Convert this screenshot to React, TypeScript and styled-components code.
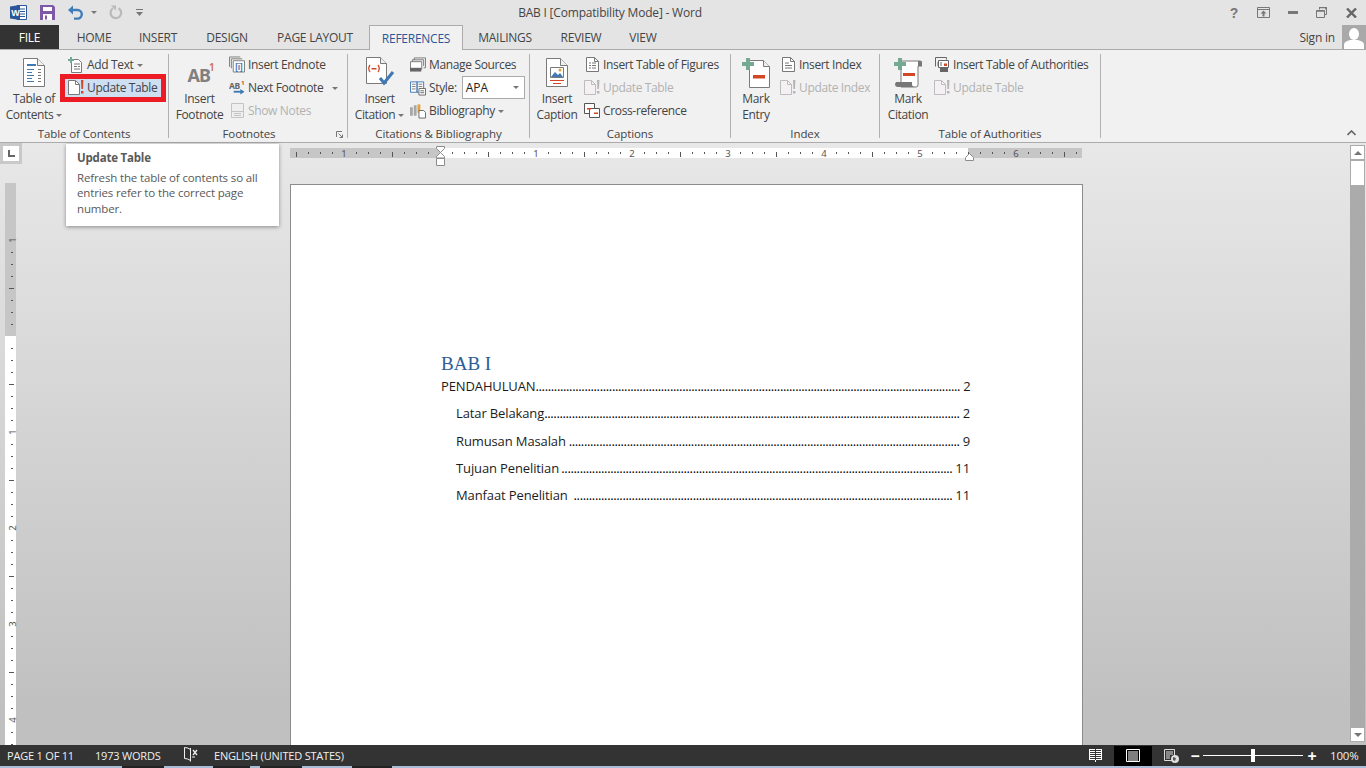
import React from 'react';
import styled, {createGlobalStyle} from 'styled-components';

const GlobalStyle = createGlobalStyle`
  html, body {
    margin: 0;
    padding: 0;
    height: 100%;
    overflow: hidden;
    background: #e4e4e4;
  }
  body {
    font-family: "Open Sans", "Noto Sans", sans-serif;
    font-size: 12px;
    color: #444;
  }
`;

// window frame
const Window = styled.div`
  position: relative;
  width: 1366px;
  height: 768px;
  display: flex;
  flex-direction: column;
  overflow: hidden;
`;

const TitleBar = styled.div`
  height: 25px;
  flex: none;
  display: flex;
  align-items: center;
  background: #e4e4e4;
`;

const QuickAccess = styled.div`
  width: 340px;
  padding-left: 10px;
  box-sizing: border-box;
  display: flex;
  align-items: center;
`;

const QuickIcon = styled.span<{$w: number}>`
  width: ${props => props.$w}px;
  display: flex;
  align-items: center;
`;

const WindowTitle = styled.div`
  width: 540px;
  text-align: center;
  font-size: 12px;
  letter-spacing: -0.2px;
  color: #444;
`;

const WindowControls = styled.div`
  margin-left: auto;
  display: flex;
  align-items: center;
`;

const WindowButton = styled.span`
  width: 29.4px;
  height: 25px;
  display: flex;
  align-items: center;
  justify-content: center;
`;

const TabBar = styled.div`
  height: 25px;
  flex: none;
  display: flex;
  align-items: stretch;
  background: #e4e4e4;
  border-bottom: 1px solid #ababab;
  box-sizing: border-box;
`;

const FileTab = styled.div`
  width: 59px;
  margin-right: 3px;
  background: #333;
  color: #fff;
  display: flex;
  align-items: center;
  justify-content: center;
  letter-spacing: -0.2px;
`;

const Tab = styled.div<{$w: number; $active?: boolean}>`
  width: ${props => props.$w}px;
  box-sizing: border-box;
  margin-left: ${props => (props.$active ? '3px' : '0')};
  display: flex;
  align-items: center;
  justify-content: center;
  letter-spacing: -0.25px;
  color: ${props => (props.$active ? '#2b579a' : '#444')};
  background: ${props => (props.$active ? '#f1f1f1' : 'transparent')};
  border: ${props => (props.$active ? '1px solid #ababab' : 'none')};
  border-bottom: none;
  height: ${props => (props.$active ? '25px' : 'auto')};
`;

const SignIn = styled.div`
  margin-left: auto;
  display: flex;
  align-items: center;
  gap: 7px;
  letter-spacing: -0.2px;
`;

const Avatar = styled.div`
  width: 24px;
  height: 24px;
  background: #a9a9a9;
  display: flex;
  align-items: flex-end;
  justify-content: center;
`;

// ribbon
const Ribbon = styled.div`
  position: relative;
  height: 93px;
  flex: none;
  box-sizing: border-box;
  padding-top: 4px;
  display: flex;
  align-items: flex-start;
  background: #f1f1f1;
  border-bottom: 1px solid #ababab;
`;

const Group = styled.div<{$w: number}>`
  position: relative;
  width: ${props => props.$w}px;
  height: 84px;
  box-sizing: border-box;
  padding-left: 5px;
  border-right: 1px solid #b1b1b1;
  flex: none;
`;

const GroupBody = styled.div<{$gap: number}>`
  height: 72px;
  display: flex;
  gap: ${props => props.$gap}px;
`;

const GroupLabel = styled.div<{$launcher?: boolean}>`
  height: 12px;
  line-height: 15px;
  margin-left: -5px;
  padding-right: ${props => (props.$launcher ? '18px' : '0')};
  text-align: center;
  font-size: 11.5px;
  letter-spacing: -0.1px;
  color: #444;
`;

const LargeButton = styled.div<{$w: number}>`
  width: ${props => props.$w}px;
  flex: none;
  display: flex;
  flex-direction: column;
  align-items: center;
`;

const LargeIcon = styled.div`
  height: 37px;
  display: flex;
  align-items: center;
  justify-content: center;
`;

const LargeText = styled.div`
  font-size: 12px;
  line-height: 16px;
  text-align: center;
  white-space: nowrap;
  letter-spacing: -0.35px;
`;

const SmallColumn = styled.div`
  margin-top: -1px;
  display: flex;
  flex-direction: column;
`;

const SmallButton = styled.div<{$marked?: boolean; $disabled?: boolean}>`
  display: flex;
  align-items: center;
  gap: 3px;
  box-sizing: border-box;
  padding: ${props => (props.$marked ? '0 4px 1px 3px' : '0 4px 0 3px')};
  height: ${props => (props.$marked ? '18px' : '23px')};
  margin: ${props => (props.$marked ? '3px 0 2px' : '0')};
  white-space: nowrap;
  letter-spacing: -0.35px;
  color: ${props => (props.$disabled ? '#b1b1b1' : '#444')};
  background: ${props => (props.$marked ? '#cfdff2' : 'transparent')};
  outline: ${props => (props.$marked ? '5px solid #ed1c24' : 'none')};
`;

const SmallIcon = styled.span`
  width: 16px;
  height: 16px;
  flex: none;
  display: flex;
  align-items: center;
  justify-content: center;
`;

const Caret = styled.span<{$left?: number}>`
  display: inline-block;
  width: 0;
  height: 0;
  margin-left: ${props => props.$left ?? 3}px;
  vertical-align: middle;
  border-left: 3px solid transparent;
  border-right: 3px solid transparent;
  border-top: 3px solid #777;
`;

const StyleBox = styled.div`
  width: 63px;
  height: 23px;
  margin-left: 2px;
  padding: 0 5px 0 3px;
  box-sizing: border-box;
  display: flex;
  align-items: center;
  justify-content: space-between;
  background: #fff;
  border: 1px solid #ababab;
  color: #222;
  letter-spacing: 0;
`;

const Launcher = styled.span`
  position: absolute;
  right: 4px;
  bottom: 0;
  line-height: 0;
`;

const Collapse = styled.span`
  position: absolute;
  right: 10px;
  bottom: 6px;
  line-height: 0;
`;

const Tooltip = styled.div`
  position: absolute;
  left: 66px;
  top: 144px;
  width: 213px;
  height: 82px;
  box-sizing: border-box;
  padding: 6px 11px;
  background: #fff;
  color: #595959;
  box-shadow: 0 1px 4px rgba(0, 0, 0, 0.4);
  z-index: 5;
`;

const TooltipTitle = styled.div`
  font-weight: 700;
  font-size: 11.5px;
  line-height: 15px;
  letter-spacing: -0.2px;
  margin-bottom: 5px;
`;

const TooltipText = styled.div`
  font-size: 11.5px;
  line-height: 15.4px;
  letter-spacing: -0.14px;
`;

// document area
const Workspace = styled.div`
  flex: 1;
  min-height: 0;
  display: grid;
  grid-template-columns: 22px 1fr 16px;
  background: linear-gradient(#e8e8e8 0%, #c0c0c0 94%);
`;

const LeftRail = styled.div`
  display: flex;
  flex-direction: column;
  align-items: flex-start;
`;

const TabSelector = styled.div`
  width: 22px;
  height: 21px;
  box-sizing: border-box;
  padding: 3px;
  background: #c9c9c9;
`;

const TabSelectorInner = styled.div`
  width: 16px;
  height: 15px;
  background: #fff;
  display: flex;
  align-items: center;
  justify-content: center;
`;

const VRuler = styled.div`
  margin: 19px 0 0 5px;
  width: 11px;
  flex: 1;
  background: linear-gradient(#c6c6c6 0, #c6c6c6 153px, #fff 153px);
`;

const Center = styled.div`
  min-width: 0;
  padding-left: 268px;
  display: flex;
  flex-direction: column;
  align-items: flex-start;
`;

const HRuler = styled.div`
  position: relative;
  margin-top: 5px;
  width: 792px;
  height: 10px;
  background: linear-gradient(90deg, #c6c6c6 0, #c6c6c6 150px, #fff 150px, #fff 678px, #c6c6c6 678px);
`;

const RulerMarks = styled.svg`
  display: block;
  overflow: visible;
`;

const IndentLeft = styled.svg`
  position: absolute;
  left: 146px;
  top: -2px;
`;

const IndentRight = styled.svg`
  position: absolute;
  left: 675px;
  top: 5px;
`;

const Page = styled.div`
  margin-top: 26px;
  width: 793px;
  flex: 1;
  box-sizing: border-box;
  padding: 166px 112px 0 150px;
  background: #fff;
  border: 1px solid #8c8c8c;
  border-bottom: none;
`;

const Heading = styled.div`
  font-family: "Liberation Serif", serif;
  font-size: 19px;
  line-height: 25px;
  color: #2e5d98;
`;

const TocRow = styled.div<{$indent?: boolean}>`
  height: 20px;
  margin-bottom: 7.3px;
  padding-left: ${props => (props.$indent ? '15px' : '0')};
  display: flex;
  align-items: center;
  font-size: 13px;
  color: #1c1c1c;
`;

const TocLabel = styled.span`
  white-space: nowrap;
  letter-spacing: -0.12px;
`;

const Leader = styled.span`
  margin-left: auto;
  white-space: nowrap;
  letter-spacing: -0.36px;
  color: #000;
`;

const TocPage = styled.span`
  margin-left: 3px;
  letter-spacing: -0.12px;
`;

const Scrollbar = styled.div`
  width: 15px;
  display: flex;
  flex-direction: column;
  padding: 2px 0 3px;
  box-sizing: border-box;
`;

const ScrollArrow = styled.div`
  width: 15px;
  height: 15px;
  flex: none;
  box-sizing: border-box;
  background: #fff;
  border: 1px solid #ababab;
  display: flex;
  align-items: center;
  justify-content: center;
`;

const ScrollTrack = styled.div`
  flex: 1;
  background: #ababab;
`;

const ScrollThumb = styled.div`
  height: 26px;
  box-sizing: border-box;
  background: #fff;
  border: 1px solid #ababab;
`;

const Triangle = styled.span<{$down?: boolean}>`
  width: 0;
  height: 0;
  border-left: 4px solid transparent;
  border-right: 4px solid transparent;
  border-bottom: ${props => (props.$down ? 'none' : '4px solid #777')};
  border-top: ${props => (props.$down ? '4px solid #777' : 'none')};
`;

// status bar
const StatusBar = styled.div`
  height: 21px;
  flex: none;
  padding-left: 7px;
  display: flex;
  align-items: center;
  background: #333;
  color: #f0f0f0;
  font-size: 11px;
  letter-spacing: -0.2px;
`;

const StatusText = styled.span<{$w: number}>`
  width: ${props => props.$w}px;
  flex: none;
  white-space: nowrap;
`;

const StatusRight = styled.div`
  margin-left: auto;
  height: 100%;
  display: flex;
  align-items: center;
`;

const ViewButton = styled.span<{$active?: boolean}>`
  width: 38px;
  height: 20px;
  display: flex;
  align-items: center;
  justify-content: center;
  background: ${props => (props.$active ? '#000' : 'transparent')};
`;

const ZoomSlider = styled.div`
  position: relative;
  width: 100px;
  height: 1px;
  margin: 0 4px 0 3px;
  background: #fff;
`;

const ZoomThumb = styled.span`
  position: absolute;
  left: 48px;
  top: -6px;
  width: 4px;
  height: 13px;
  background: #fff;
`;

const ZoomSign = styled.span`
  width: 10px;
  font-size: 16px;
  font-weight: 700;
  line-height: 16px;
  text-align: center;
  color: #fff;
`;

const ZoomValue = styled.span`
  width: 49px;
  padding-left: 13px;
  box-sizing: border-box;
  font-size: 11.5px;
`;

const TaskbarEdge = styled.div`
  height: 2px;
  flex: none;
  background: linear-gradient(
    90deg,
    #a9bdd6 0, #a9bdd6 122px, #222 122px, #222 164px, #a9bdd6 164px, #a9bdd6 213px,
    #222 213px, #222 250px, #a9bdd6 250px, #a9bdd6 260px, #222 260px, #222 302px,
    #a9bdd6 302px, #a9bdd6 352px, #222 352px, #222 392px, #a9bdd6 392px
  );
`;

// icons
const GREY = '#7a7a7a';
const BLUE = '#3f78b5';
const RED = '#d24726';
const GREEN = '#74a993';

const WordIcon = () => (
  <svg width="17" height="17" viewBox="0 0 17 17">
    <path d="M7 1.5h9.5v14H7z" fill="#fff" stroke="#2b579a" />
    <path d="M10 5h5M10 7.5h5M10 10h5M10 12.5h5" stroke="#2b579a" />
    <path d="M0 2.5L10 1v15L0 14.5z" fill="#2b579a" />
    <text x="1.2" y="12" fontFamily="Liberation Sans" fontSize="9" fontWeight="700" fill="#fff">W</text>
  </svg>
);

const SaveIcon = () => (
  <svg width="15" height="15" viewBox="0 0 15 15">
    <path d="M0 0h13l2 2v13H0z" fill="#8058a8" />
    <path d="M3 2h9v4H3z" fill="#fff" />
    <path d="M3 9h9v6H3z" fill="#fff" />
    <path d="M5 10.5h2v4H5z" fill="#8058a8" />
  </svg>
);

const UndoIcon = () => (
  <svg width="16" height="15" viewBox="0 0 16 15">
    <path d="M4 5h5.5a4.3 4.3 0 0 1 0 8.6H6" fill="none" stroke="#3f7cb8" strokeWidth="2.4" />
    <path d="M0 5l5-4.5v9z" fill="#3f7cb8" />
  </svg>
);

const RedoIcon = () => (
  <svg width="14" height="15" viewBox="0 0 14 15">
    <path d="M9.5 3.2a5.3 5.3 0 1 1-5.6.2" fill="none" stroke="#b9b9b9" strokeWidth="2.2" />
    <path d="M2 0.5h5v5z" fill="#b9b9b9" />
  </svg>
);

const CustomizeIcon = () => (
  <svg width="7" height="7" viewBox="0 0 7 7">
    <path d="M0 0h7v1H0zM0 3h7L3.5 7z" fill="#777" />
  </svg>
);

const Help = () => (
  <svg width="10" height="13" viewBox="0 0 10 13">
    <text x="5" y="11.5" textAnchor="middle" fontFamily="Liberation Sans" fontWeight="700" fontSize="14" fill="#777">?</text>
  </svg>
);

const RibbonDisplay = () => (
  <svg width="13" height="11" viewBox="0 0 13 11">
    <path d="M.5.5h12v10H.5z" fill="none" stroke="#777" />
    <path d="M1 2.5h11" stroke="#777" />
    <path d="M6.5 3.5l3 3h-2v3h-2v-3h-2z" fill="#777" />
  </svg>
);

const MinIcon = () => (
  <svg width="10" height="3" viewBox="0 0 10 3">
    <path d="M0 0h10v3H0z" fill="#777" />
  </svg>
);

const RestoreIcon = () => (
  <svg width="11" height="11" viewBox="0 0 11 11">
    <path d="M3.5 2.5v-2h7v7h-2" fill="none" stroke="#777" />
    <path d="M3 .5h7v2" fill="none" stroke="#777" strokeWidth="1.5" />
    <path d="M.5 3.5h8v7h-8z" fill="none" stroke="#777" />
    <path d="M.5 4h8" stroke="#777" strokeWidth="1.5" />
  </svg>
);

const CloseIcon = () => (
  <svg width="11" height="10" viewBox="0 0 11 10">
    <path d="M1 .5l9 9M10 .5l-9 9" stroke="#666" strokeWidth="2.4" />
  </svg>
);

const PersonIcon = () => (
  <svg width="20" height="22" viewBox="0 0 20 22">
    <ellipse cx="10" cy="7" rx="5" ry="6" fill="#fff" />
    <path d="M0 22v-4c0-3 3-4 6-5h8c3 1 6 2 6 5v4z" fill="#fff" />
  </svg>
);

const TocIcon = () => (
  <svg width="22" height="29" viewBox="0 0 22 29">
    <path d="M.5.5h14l7 7v21H.5z" fill="#fff" stroke={GREY} />
    <path d="M14.5.5v7h7" fill="#f0f0f0" stroke={GREY} />
    <path d="M4 6h9v2H4z" fill={BLUE} />
    <path d="M4 11h7v1H4zM4 14h5v1H4zM4 17h7v1H4zM4 20h5v1H4zM4 23h7v1H4z" fill={BLUE} />
    <path d="M15 11h3v1h-3zM15 14h3v1h-3zM15 17h3v1h-3zM15 20h3v1h-3zM15 23h3v1h-3z" fill="#777" />
  </svg>
);

const AddTextIcon = () => (
  <svg width="16" height="16" viewBox="0 0 16 16">
    <path d="M3.5 2.5h7l3 3v10h-10z" fill="#fff" stroke={GREY} />
    <path d="M6 7h6M6 9.5h3M10 9.5h2M6 12h6" stroke="#777" />
    <path d="M2 0h2v2h2v2H4v2H2V4H0V2h2z" fill={GREEN} />
  </svg>
);

const UpdateIcon = ({disabled}: {disabled?: boolean}) => (
  <svg width="16" height="15" viewBox="0 0 16 15">
    <path d="M.5.5h7l4 4v10H.5z" fill={disabled ? '#f4f0f4' : '#fff'} stroke={disabled ? '#bdbdbd' : '#7a7a7a'} />
    <path d="M7.5.5v4h4" fill="none" stroke={disabled ? '#bdbdbd' : '#7a7a7a'} />
    <path d="M13 0h2.4l-.4 9h-1.6zM13 11h2.4v2.5H13z" fill={disabled ? '#b5b5b5' : RED} />
  </svg>
);

const FootnoteIcon = () => (
  <svg width="30" height="30" viewBox="0 0 30 30">
    <text x="2.5" y="23.5" fontFamily="Noto Sans" fontWeight="700" fontSize="18" letterSpacing="-1" fill="#808080">AB</text>
    <text x="24" y="12.5" fontFamily="Noto Sans" fontWeight="600" fontSize="10" fill="#d2694a">1</text>
  </svg>
);

const EndnoteIcon = () => (
  <svg width="17" height="17" viewBox="0 0 17 17">
    <path d="M.5 11V.5H12M2.5 12.5V2.5H14" fill="none" stroke={GREY} />
    <path d="M4.5 4.5h12v12h-12z" fill="#fff" stroke={GREY} />
    <text x="10.5" y="14" textAnchor="middle" fontFamily="Liberation Sans" fontWeight="700" fontSize="9" fill={BLUE}>[i]</text>
  </svg>
);

const NextFootnoteIcon = () => (
  <svg width="17" height="17" viewBox="0 0 17 17">
    <text x="0" y="10" fontFamily="Noto Sans" fontWeight="700" fontSize="9" fill="#666">AB</text>
    <text x="13" y="5.5" fontFamily="Noto Sans" fontWeight="700" fontSize="6" fill={RED}>1</text>
    <path d="M5 13h8" stroke={BLUE} strokeWidth="2" />
    <path d="M12 10l4.5 3-4.5 3z" fill={BLUE} />
  </svg>
);

const ShowNotesIcon = () => (
  <svg width="13" height="15" viewBox="0 0 13 15">
    <path d="M.5.5h12v14H.5z" fill="#efefef" stroke="#c4c4c4" />
    <path d="M1 8.5h11M3 10.5h7M3 12.5h7" stroke="#c4c4c4" />
  </svg>
);

const CitationIcon = () => (
  <svg width="30" height="31" viewBox="0 0 30 31">
    <path d="M1.5.5h14l6 6v20h-20z" fill="#fff" stroke={GREY} />
    <path d="M15.5.5v6h6" fill="#f0f0f0" stroke={GREY} />
    <path d="M5 8q-2.5 3.5 0 7M13 8q2.5 3.5 0 7" fill="none" stroke={RED} strokeWidth="1.3" />
    <path d="M6.5 11h5v1.5h-5z" fill={RED} />
    <path d="M15 21l4 5 9-11" fill="none" stroke={BLUE} strokeWidth="3" />
  </svg>
);

const SourcesIcon = () => (
  <svg width="17" height="15" viewBox="0 0 17 15">
    <path d="M4.5 3V.5h12V11h-2M2.5 5V2.5h12V9" fill="none" stroke="#777" />
    <path d="M.5 4.5h12v8H.5z" fill="#fff" stroke="#777" />
    <path d="M0 11h12v4H0z" fill="#666" />
  </svg>
);

const StyleIcon = () => (
  <svg width="17" height="16" viewBox="0 0 17 16">
    <path d="M.5 1.5h7v11h-7zM7.5 1.5h7v11h-7z" fill="#fff" stroke={BLUE} />
    <path d="M2 4h4M2 6.5h4M2 9h4M9 4h4M9 6.5h4" stroke="#777" />
    <path d="M9.5 8.5h7v7h-7z" fill="#fff" stroke="#666" />
    <path d="M11 11h4M11 13h4" stroke="#666" />
  </svg>
);

const BibliographyIcon = () => (
  <svg width="17" height="16" viewBox="0 0 17 16">
    <path d="M0 4h3v9H0zM4 2h3v11H4z" fill="#a7a7a7" />
    <path d="M8 1h3v9H8z" fill="#e2a33b" />
    <path d="M9.5 7.5h5l2 2v6h-7z" fill="#fff" stroke="#666" />
  </svg>
);

const CaptionIcon = () => (
  <svg width="22" height="29" viewBox="0 0 22 29">
    <path d="M.5.5h14l7 7v21H.5z" fill="#fff" stroke={GREY} />
    <path d="M14.5.5v7h7" fill="#f0f0f0" stroke={GREY} />
    <path d="M4.5 9.5h13v10h-13z" fill="#fff" stroke={GREY} />
    <path d="M5 19l4-5 3 3 2-2 3 4z" fill={BLUE} />
    <circle cx="14" cy="12" r="1.5" fill="#e2a33b" />
    <path d="M4 22h14v1H4zM7 25h8v1H7z" fill={RED} />
  </svg>
);

const FiguresIcon = () => (
  <svg width="13" height="15" viewBox="0 0 13 15">
    <path d="M.5.5h8l4 4v10H.5z" fill="#fff" stroke="#777" />
    <path d="M8.5.5v4h4" fill="none" stroke="#777" />
    <path d="M3 6h2M6 6h4M3 8.5h2M6 8.5h4M3 11h2M6 11h4" stroke="#777" />
  </svg>
);

const CrossRefIcon = () => (
  <svg width="16" height="15" viewBox="0 0 16 15">
    <path d="M.5.5h10v10H.5z" fill="#fff" stroke="#555" />
    <path d="M5.5 5.5h10v9h-10z" fill="#fff" stroke="#555" />
    <path d="M3 5h4v1.5H3zM10 9.5h4V11h-4z" fill={RED} />
  </svg>
);

const MarkEntryIcon = () => (
  <svg width="28" height="30" viewBox="0 0 28 30">
    <path d="M7.5 2.5h14l6 6v21h-20z" fill="#fff" stroke={GREY} />
    <path d="M21.5 2.5v6h6" fill="#f0f0f0" stroke={GREY} />
    <path d="M4 0h4v4h4v4H8v4H4V8H0V4h4z" fill={GREEN} />
    <path d="M11 17h12v3.5H11z" fill={RED} />
  </svg>
);

const IndexIcon = () => (
  <svg width="13" height="15" viewBox="0 0 13 15">
    <path d="M.5.5h8l4 4v10H.5z" fill="#fff" stroke="#777" />
    <path d="M8.5.5v4h4" fill="none" stroke="#777" />
    <path d="M3 6h4M3 8.5h7M3 11h7" stroke="#777" />
  </svg>
);

const MarkCitationIcon = () => (
  <svg width="28" height="30" viewBox="0 0 28 30">
    <path d="M7 3h19a2 2 0 0 1 2 2v3h-4v19a2 2 0 0 1-2 2H7z" fill="#fff" stroke={GREY} />
    <path d="M24 3h2a2 2 0 0 1 2 2v3h-4z" fill="#777" />
    <path d="M2 24h16v2a3 3 0 0 0 3 3H4a3 3 0 0 1-3-3z" fill="#777" />
    <path d="M4 0h4v4h4v4H8v4H4V8H0V4h4z" fill={GREEN} />
    <path d="M9 15h12v3H9z" fill={RED} />
  </svg>
);

const AuthoritiesIcon = () => (
  <svg width="15" height="15" viewBox="0 0 15 15">
    <path d="M.5 9.5V.5h11v2" fill="none" stroke="#666" />
    <path d="M3.5 3.5h10v7h-10z" fill="#fff" stroke="#666" />
    <path d="M2 6h1M2 8h1M5 6h2M5 8h2" stroke="#666" />
    <path d="M9 6.5h3V9H9z" fill={RED} />
    <path d="M5 11h8v4H5z" fill="#666" />
  </svg>
);

const LauncherIcon = () => (
  <svg width="7" height="7" viewBox="0 0 7 7">
    <path d="M.5 6V.5H6M2.5 2.5l4 4M6.5 3.5v3h-3" fill="none" stroke="#777" />
  </svg>
);

const CollapseIcon = () => (
  <svg width="9" height="6" viewBox="0 0 9 6">
    <path d="M.5 5l4-4 4 4" fill="none" stroke="#666" strokeWidth="1.6" />
  </svg>
);

const TabStopIcon = () => (
  <svg width="7" height="7" viewBox="0 0 7 7">
    <path d="M0 0h2v5h5v2H0z" fill="#666" />
  </svg>
);

const ProofingIcon = () => (
  <svg width="14" height="15" viewBox="0 0 14 15">
    <path d="M6.5 2.5Q4 .5.5.5v11q3.5 0 6 2" fill="none" stroke="#f0f0f0" />
    <path d="M6.5 1v13.5" stroke="#f0f0f0" />
    <path d="M9 3l4 5M13 3L9 8" stroke="#f0f0f0" strokeWidth="1.3" />
    <path d="M8 10h3" stroke="#f0f0f0" />
  </svg>
);

const ReadIcon = () => (
  <svg width="13" height="13" viewBox="0 0 13 13">
    <path d="M0 .5h6M7 .5h6M1 2.5h5M7 2.5h5M1 4.5h5M7 4.5h5M1 6.5h5M7 6.5h5M1 8.5h5M7 8.5h5M0 10.5h6M7 10.5h6" stroke="#fff" />
    <path d="M.5 0v11M12.5 0v11M6.5 11v2" stroke="#fff" />
  </svg>
);

const PrintIcon = () => (
  <svg width="14" height="13" viewBox="0 0 14 13">
    <path d="M.5.5h13v12H.5z" fill="none" stroke="#fff" />
    <path d="M2 3h10M2 5h10M2 7h10M2 9h10M2 11h10" stroke="#fff" />
  </svg>
);

const WebIcon = () => (
  <svg width="15" height="14" viewBox="0 0 15 14">
    <path d="M.5.5h10v11H.5z" fill="none" stroke="#ddd" />
    <path d="M2 3h7M2 5h7M2 7h4M2 9h4" stroke="#ddd" />
    <circle cx="11" cy="10" r="4" fill="#ddd" />
    <path d="M9 8l3 1-1 3-2-1z" fill="#555" />
  </svg>
);

// rulers
const range = (from: number, to: number) => Array.from({length: to - from + 1}, (_, i) => from + i);

const horizontalTicks = () => range(-12, 53).map(offset => {
  const x = 150 + offset * 12;
  if (offset === 0) return null;
  if (offset % 8 === 0) {
    return (
      <text key={offset} x={x} y={8.5} textAnchor="middle" fontSize="9.5" fontFamily="Noto Sans" fill="#555">
        {Math.abs(offset / 8)}
      </text>
    );
  }
  const long = offset % 4 === 0;
  return <rect key={offset} x={x} y="4" width="1" height={long ? 5 : 2} fill="#555" />;
});

const verticalTicks = () => range(-8, 34).map(offset => {
  const y = 153 + offset * 12;
  if (offset === 0) return null;
  if (offset % 8 === 0) {
    return (
      <text key={offset} x="0" y="0" textAnchor="middle" fontSize="9.5" fontFamily="Noto Sans" fill="#555"
            transform={`translate(10.5 ${y}) rotate(-90)`}>
        {Math.abs(offset / 8)}
      </text>
    );
  }
  const long = offset % 4 === 0;
  return <rect key={offset} x={long ? 4 : 6} y={y} width={long ? 5 : 2} height="1" fill="#555" />;
});

const tocEntries = [
  {title: 'Latar Belakang', page: '2', dots: 136},
  {title: 'Rumusan Masalah', page: '9', dots: 128},
  {title: 'Tujuan Penelitian', page: '11', dots: 128},
  {title: 'Manfaat Penelitian', page: '11', dots: 124},
];

const tabs = [
  {name: 'HOME', w: 64},
  {name: 'INSERT', w: 64},
  {name: 'DESIGN', w: 74},
  {name: 'PAGE LAYOUT', w: 102},
  {name: 'REFERENCES', w: 94, active: true},
  {name: 'MAILINGS', w: 84},
  {name: 'REVIEW', w: 68},
  {name: 'VIEW', w: 56},
];

const App: React.FC = () => (
  <Window>
    <GlobalStyle />
    <TitleBar>
      <QuickAccess>
        <QuickIcon $w={30}><WordIcon /></QuickIcon>
        <QuickIcon $w={28}><SaveIcon /></QuickIcon>
        <QuickIcon $w={23}><UndoIcon /></QuickIcon>
        <QuickIcon $w={18}><Caret $left={0} /></QuickIcon>
        <QuickIcon $w={27}><RedoIcon /></QuickIcon>
        <QuickIcon $w={10}><CustomizeIcon /></QuickIcon>
      </QuickAccess>
      <WindowTitle>BAB I [Compatibility Mode] - Word</WindowTitle>
      <WindowControls>
        <WindowButton><Help /></WindowButton>
        <WindowButton><RibbonDisplay /></WindowButton>
        <WindowButton><MinIcon /></WindowButton>
        <WindowButton><RestoreIcon /></WindowButton>
        <WindowButton><CloseIcon /></WindowButton>
      </WindowControls>
    </TitleBar>

    <TabBar>
      <FileTab>FILE</FileTab>
      {tabs.map(tab => (
        <Tab key={tab.name} $w={tab.w} $active={tab.active}>{tab.name}</Tab>
      ))}
      <SignIn>
        Sign in
        <Avatar><PersonIcon /></Avatar>
      </SignIn>
    </TabBar>

    <Ribbon>
      <Group $w={169}>
        <GroupBody $gap={2}>
          <LargeButton $w={58}>
            <LargeIcon><TocIcon /></LargeIcon>
            <LargeText>Table of<br />Contents<Caret /></LargeText>
          </LargeButton>
          <SmallColumn>
            <SmallButton><SmallIcon><AddTextIcon /></SmallIcon><span>Add Text<Caret /></span></SmallButton>
            <SmallButton $marked><SmallIcon><UpdateIcon /></SmallIcon>Update Table</SmallButton>
          </SmallColumn>
        </GroupBody>
        <GroupLabel>Table of Contents</GroupLabel>
      </Group>

      <Group $w={179}>
        <GroupBody $gap={1}>
          <LargeButton $w={51}>
            <LargeIcon><FootnoteIcon /></LargeIcon>
            <LargeText>Insert<br />Footnote</LargeText>
          </LargeButton>
          <SmallColumn>
            <SmallButton><SmallIcon><EndnoteIcon /></SmallIcon>Insert Endnote</SmallButton>
            <SmallButton><SmallIcon><NextFootnoteIcon /></SmallIcon><span>Next Footnote<Caret $left={9} /></span></SmallButton>
            <SmallButton $disabled><SmallIcon><ShowNotesIcon /></SmallIcon>Show Notes</SmallButton>
          </SmallColumn>
        </GroupBody>
        <GroupLabel $launcher>Footnotes</GroupLabel>
        <Launcher><LauncherIcon /></Launcher>
      </Group>

      <Group $w={182}>
        <GroupBody $gap={1}>
          <LargeButton $w={53}>
            <LargeIcon><CitationIcon /></LargeIcon>
            <LargeText>Insert<br />Citation<Caret /></LargeText>
          </LargeButton>
          <SmallColumn>
            <SmallButton><SmallIcon><SourcesIcon /></SmallIcon>Manage Sources</SmallButton>
            <SmallButton>
              <SmallIcon><StyleIcon /></SmallIcon>Style:
              <StyleBox>APA<Caret $left={0} /></StyleBox>
            </SmallButton>
            <SmallButton><SmallIcon><BibliographyIcon /></SmallIcon><span>Bibliography<Caret /></span></SmallButton>
          </SmallColumn>
        </GroupBody>
        <GroupLabel>Citations &amp; Bibliography</GroupLabel>
      </Group>

      <Group $w={201}>
        <GroupBody $gap={2}>
          <LargeButton $w={44}>
            <LargeIcon><CaptionIcon /></LargeIcon>
            <LargeText>Insert<br />Caption</LargeText>
          </LargeButton>
          <SmallColumn>
            <SmallButton><SmallIcon><FiguresIcon /></SmallIcon>Insert Table of Figures</SmallButton>
            <SmallButton $disabled><SmallIcon><UpdateIcon disabled /></SmallIcon>Update Table</SmallButton>
            <SmallButton><SmallIcon><CrossRefIcon /></SmallIcon>Cross-reference</SmallButton>
          </SmallColumn>
        </GroupBody>
        <GroupLabel>Captions</GroupLabel>
      </Group>

      <Group $w={149}>
        <GroupBody $gap={1}>
          <LargeButton $w={40}>
            <LargeIcon><MarkEntryIcon /></LargeIcon>
            <LargeText>Mark<br />Entry</LargeText>
          </LargeButton>
          <SmallColumn>
            <SmallButton><SmallIcon><IndexIcon /></SmallIcon>Insert Index</SmallButton>
            <SmallButton $disabled><SmallIcon><UpdateIcon disabled /></SmallIcon>Update Index</SmallButton>
          </SmallColumn>
        </GroupBody>
        <GroupLabel>Index</GroupLabel>
      </Group>

      <Group $w={221}>
        <GroupBody $gap={0}>
          <LargeButton $w={46}>
            <LargeIcon><MarkCitationIcon /></LargeIcon>
            <LargeText>Mark<br />Citation</LargeText>
          </LargeButton>
          <SmallColumn>
            <SmallButton><SmallIcon><AuthoritiesIcon /></SmallIcon>Insert Table of Authorities</SmallButton>
            <SmallButton $disabled><SmallIcon><UpdateIcon disabled /></SmallIcon>Update Table</SmallButton>
          </SmallColumn>
        </GroupBody>
        <GroupLabel>Table of Authorities</GroupLabel>
      </Group>

      <Collapse><CollapseIcon /></Collapse>
    </Ribbon>

    <Tooltip>
      <TooltipTitle>Update Table</TooltipTitle>
      <TooltipText>Refresh the table of contents so all entries refer to the correct page number.</TooltipText>
    </Tooltip>

    <Workspace>
      <LeftRail>
        <TabSelector>
          <TabSelectorInner><TabStopIcon /></TabSelectorInner>
        </TabSelector>
        <VRuler>
          <RulerMarks width="11" height="562">{verticalTicks()}</RulerMarks>
        </VRuler>
      </LeftRail>

      <Center>
        <HRuler>
          <RulerMarks width="792" height="10">{horizontalTicks()}</RulerMarks>
          <IndentLeft width="9" height="20" viewBox="0 0 9 20">
            <path d="M.5.5h8v2l-4 4-4-4zM4.5 6.5l4 4v1.5h-8v-1.5z" fill="#fff" stroke="#8c8c8c" />
            <path d="M.5 12.5h8v7h-8z" fill="#fff" stroke="#8c8c8c" />
          </IndentLeft>
          <IndentRight width="9" height="8" viewBox="0 0 9 8">
            <path d="M4.5.5l4 4v3h-8v-3z" fill="#fff" stroke="#8c8c8c" />
          </IndentRight>
        </HRuler>
        <Page>
          <Heading>BAB I</Heading>
          <TocRow>
            <TocLabel>PENDAHULUAN</TocLabel>
            <Leader>{'.'.repeat(139)}</Leader>
            <TocPage>2</TocPage>
          </TocRow>
          {tocEntries.map(entry => (
            <TocRow key={entry.title} $indent>
              <TocLabel>{entry.title}</TocLabel>
              <Leader>{'.'.repeat(entry.dots)}</Leader>
              <TocPage>{entry.page}</TocPage>
            </TocRow>
          ))}
        </Page>
      </Center>

      <Scrollbar>
        <ScrollArrow><Triangle /></ScrollArrow>
        <ScrollThumb />
        <ScrollTrack />
        <ScrollArrow><Triangle $down /></ScrollArrow>
      </Scrollbar>
    </Workspace>

    <StatusBar>
      <StatusText $w={88}>PAGE 1 OF 11</StatusText>
      <StatusText $w={89}>1973 WORDS</StatusText>
      <StatusText $w={30}><ProofingIcon /></StatusText>
      <StatusText $w={140}>ENGLISH (UNITED STATES)</StatusText>
      <StatusRight>
        <ViewButton><ReadIcon /></ViewButton>
        <ViewButton $active><PrintIcon /></ViewButton>
        <ViewButton><WebIcon /></ViewButton>
        <ZoomSign>−</ZoomSign>
        <ZoomSlider><ZoomThumb /></ZoomSlider>
        <ZoomSign>+</ZoomSign>
        <ZoomValue>100%</ZoomValue>
      </StatusRight>
    </StatusBar>
    <TaskbarEdge />
  </Window>
);

export default App;
